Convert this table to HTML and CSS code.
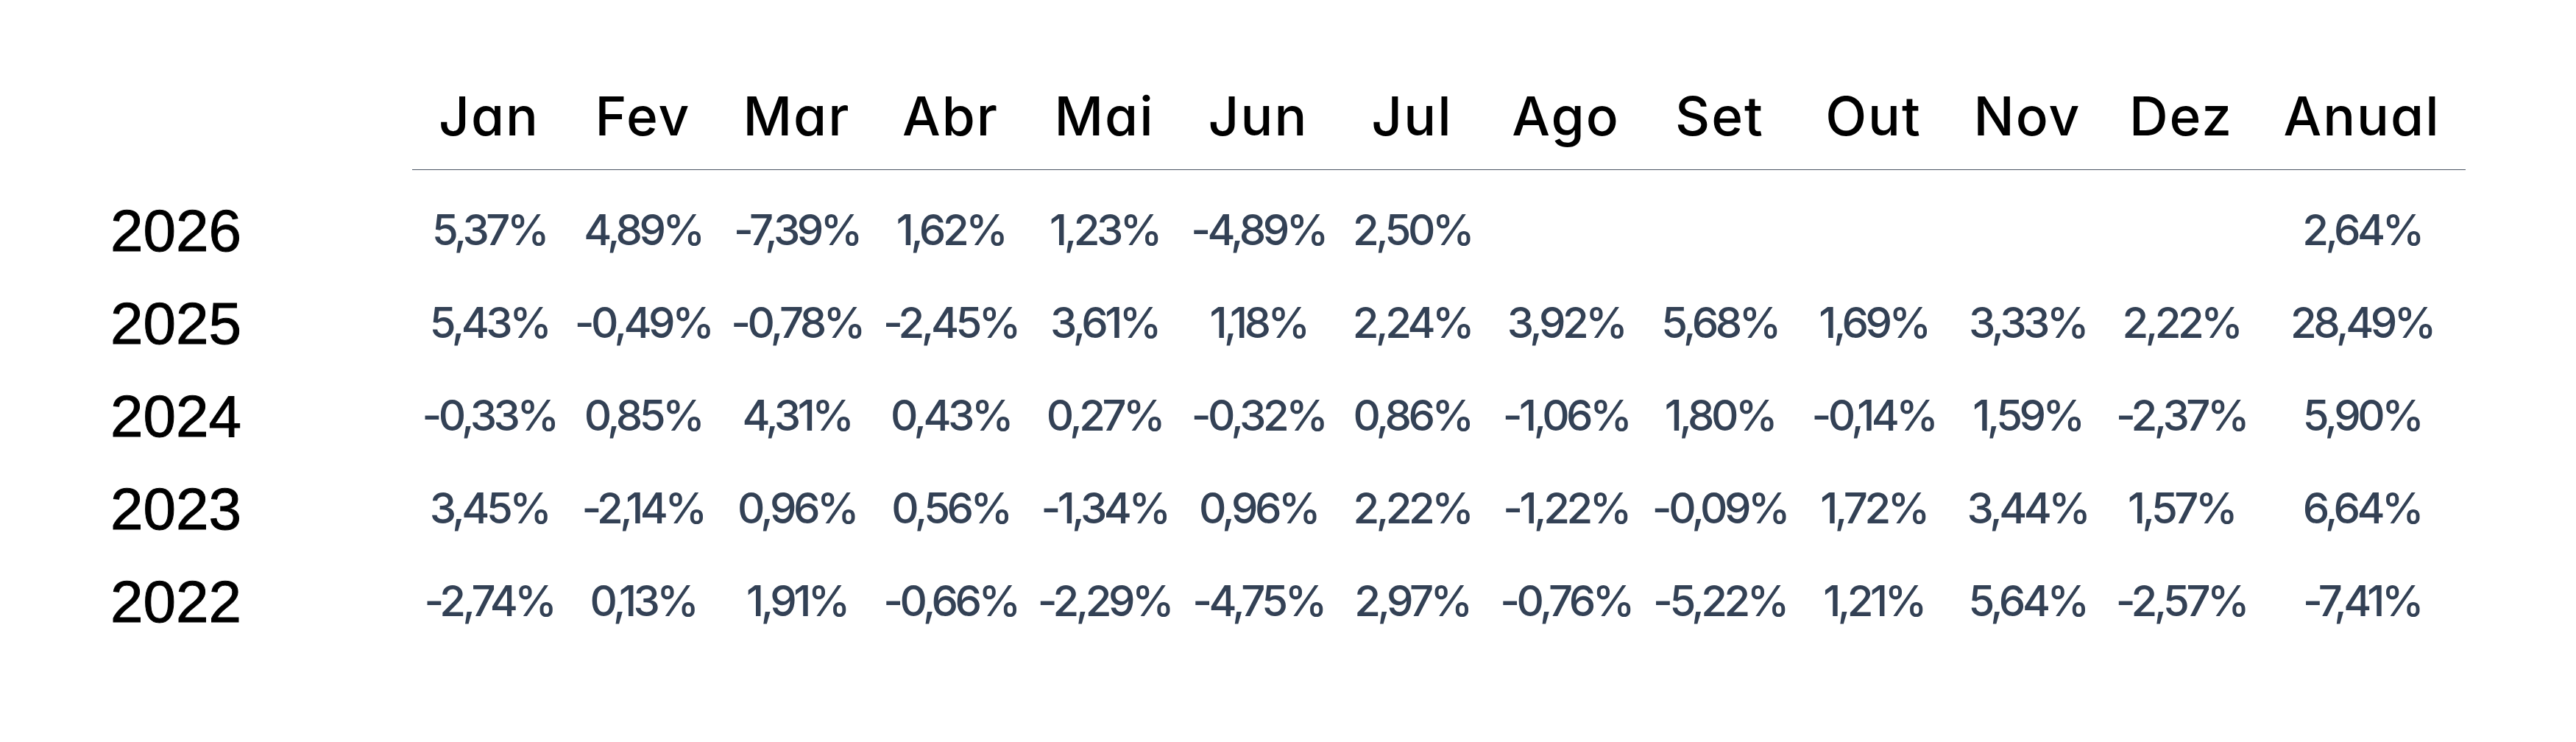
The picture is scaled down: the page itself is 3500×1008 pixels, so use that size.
FILE: index.html
```html
<!DOCTYPE html>
<html lang="pt-BR">
<head>
<meta charset="utf-8">
<title>Rentabilidade mensal</title>
<link rel="stylesheet" href="styles.css">
</head>
<body>
<div class="table">
  <div class="row head">
    <div class="year-cell"></div>
    <div class="hcell">Jan</div>
    <div class="hcell">Fev</div>
    <div class="hcell">Mar</div>
    <div class="hcell">Abr</div>
    <div class="hcell">Mai</div>
    <div class="hcell">Jun</div>
    <div class="hcell">Jul</div>
    <div class="hcell">Ago</div>
    <div class="hcell">Set</div>
    <div class="hcell">Out</div>
    <div class="hcell">Nov</div>
    <div class="hcell">Dez</div>
    <div class="hcell">Anual</div>
  </div>
  <div class="body">
    <div class="row data">
      <div class="year-cell">2026</div>
      <div class="cell">5,37%</div>
      <div class="cell">4,89%</div>
      <div class="cell">-7,39%</div>
      <div class="cell">1,62%</div>
      <div class="cell">1,23%</div>
      <div class="cell">-4,89%</div>
      <div class="cell">2,50%</div>
      <div class="cell"></div>
      <div class="cell"></div>
      <div class="cell"></div>
      <div class="cell"></div>
      <div class="cell"></div>
      <div class="cell">2,64%</div>
    </div>
    <div class="row data">
      <div class="year-cell">2025</div>
      <div class="cell">5,43%</div>
      <div class="cell">-0,49%</div>
      <div class="cell">-0,78%</div>
      <div class="cell">-2,45%</div>
      <div class="cell">3,61%</div>
      <div class="cell">1,18%</div>
      <div class="cell">2,24%</div>
      <div class="cell">3,92%</div>
      <div class="cell">5,68%</div>
      <div class="cell">1,69%</div>
      <div class="cell">3,33%</div>
      <div class="cell">2,22%</div>
      <div class="cell">28,49%</div>
    </div>
    <div class="row data">
      <div class="year-cell">2024</div>
      <div class="cell">-0,33%</div>
      <div class="cell">0,85%</div>
      <div class="cell">4,31%</div>
      <div class="cell">0,43%</div>
      <div class="cell">0,27%</div>
      <div class="cell">-0,32%</div>
      <div class="cell">0,86%</div>
      <div class="cell">-1,06%</div>
      <div class="cell">1,80%</div>
      <div class="cell">-0,14%</div>
      <div class="cell">1,59%</div>
      <div class="cell">-2,37%</div>
      <div class="cell">5,90%</div>
    </div>
    <div class="row data">
      <div class="year-cell">2023</div>
      <div class="cell">3,45%</div>
      <div class="cell">-2,14%</div>
      <div class="cell">0,96%</div>
      <div class="cell">0,56%</div>
      <div class="cell">-1,34%</div>
      <div class="cell">0,96%</div>
      <div class="cell">2,22%</div>
      <div class="cell">-1,22%</div>
      <div class="cell">-0,09%</div>
      <div class="cell">1,72%</div>
      <div class="cell">3,44%</div>
      <div class="cell">1,57%</div>
      <div class="cell">6,64%</div>
    </div>
    <div class="row data">
      <div class="year-cell">2022</div>
      <div class="cell">-2,74%</div>
      <div class="cell">0,13%</div>
      <div class="cell">1,91%</div>
      <div class="cell">-0,66%</div>
      <div class="cell">-2,29%</div>
      <div class="cell">-4,75%</div>
      <div class="cell">2,97%</div>
      <div class="cell">-0,76%</div>
      <div class="cell">-5,22%</div>
      <div class="cell">1,21%</div>
      <div class="cell">5,64%</div>
      <div class="cell">-2,57%</div>
      <div class="cell">-7,41%</div>
    </div>
  </div>
</div>
</body>
</html>
```
FILE: styles.css
```css
html, body {
  margin: 0;
  padding: 0;
  background: #ffffff;
}

.table {
  padding-top: 108px;
  font-family: "Inter", "Liberation Sans", sans-serif;
  font-feature-settings: "cv11" 1;
}

.row {
  display: grid;
  grid-template-columns: 560px repeat(12, 209px) 282px;
}

.year-cell {
  padding-right: 82px;
  text-align: center;
  font-family: "Liberation Sans", Arial, sans-serif;
  font-size: 80px;
  line-height: 126px;
  height: 126px;
  color: #000000;
  -webkit-text-stroke: 1px #000000;
}

.head .year-cell {
  height: auto;
  line-height: normal;
}

.hcell {
  text-align: center;
  font-size: 73px;
  font-weight: 500;
  letter-spacing: 2px;
  line-height: 100px;
  padding-bottom: 22px;
  color: #000000;
  border-bottom: 1px solid #4b5563;
  white-space: nowrap;
}

.body {
  margin-top: 20px;
}

.cell {
  text-align: center;
  font-size: 58px;
  font-weight: 500;
  letter-spacing: -4.5px;
  line-height: 122px;
  height: 126px;
  color: #334155;
  white-space: nowrap;
}
```
